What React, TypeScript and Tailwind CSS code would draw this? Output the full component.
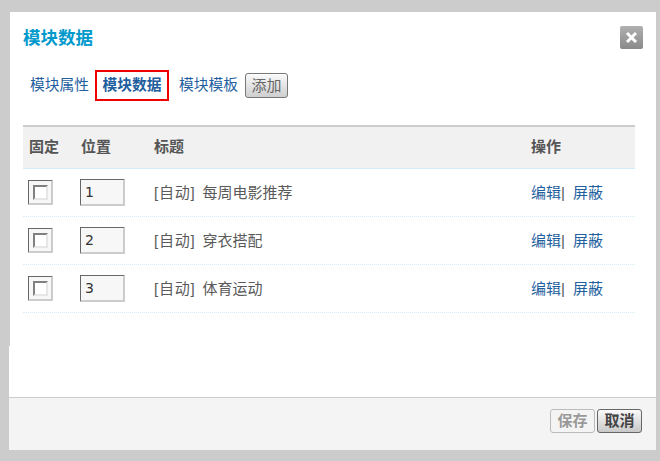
const FONT = "font-['Liberation_Sans','Noto_Sans_CJK_SC',sans-serif]";

const rows = [
  { pos: "1", title: "每周电影推荐" },
  { pos: "2", title: "穿衣搭配" },
  { pos: "3", title: "体育运动" },
];

function Row({ pos, title }: { pos: string; title: string }) {
  return (
    <div className="flex h-12 items-center border-b border-dotted border-[#d3edfb] text-[15px] text-[#5a5a5a]">
      <div className="w-[57px] pl-[5px]">
        <div className="flex h-[25px] w-[25px] items-center justify-center border border-b-2 border-r-2 border-b-[#ccc] border-l-[#666] border-r-[#ccc] border-t-[#666] bg-[#f7f7f7]">
          <input
            type="checkbox"
            readOnly
            className="h-[15px] w-[15px] appearance-none border-2 border-b-[#e6e6e6] border-l-[#808080] border-r-[#e6e6e6] border-t-[#808080] bg-white"
          />
        </div>
      </div>
      <div className="w-[74px]">
        <input
          type="text"
          readOnly
          value={pos}
          className="h-[27px] w-[45px] border border-b-2 border-r-2 border-b-[#ccc] border-l-[#666] border-r-[#ccc] border-t-[#666] bg-[#f7f7f7] pl-[4px] font-['DejaVu_Sans',sans-serif] text-[14px] text-[#333]"
        />
      </div>
      <div className="flex w-[377px] pt-px">
        <span className="mr-[7px] tracking-[0.8px]">[自动]</span>
        <span>{title}</span>
      </div>
      <div className="pt-px text-[#1f5f9f]">
        编辑<span className="text-[#555]">|</span>
        <span className="ml-[8px]">屏蔽</span>
      </div>
    </div>
  );
}

export default function App() {
  return (
    <div className={`h-[461px] w-[660px] overflow-hidden bg-[#ccc] pt-3 ${FONT}`}>
      <div className="ml-[10px] h-[334px] w-[646px] bg-white pl-[13px]">
        <div className="flex items-start justify-between pr-[13px] pt-[14px]">
          <h2 className="text-[17.5px] font-bold leading-[24px] text-[#0099cc]">模块数据</h2>
          <button className="flex h-[23px] w-[23px] items-center justify-center rounded-[2px] bg-gradient-to-b from-[#b0b0b0] to-[#8a8a8a]">
            <svg width="13" height="13" viewBox="0 0 13 13">
              <path d="M2 2 L11 11 M11 2 L2 11" stroke="#fff" strokeWidth="3" />
            </svg>
          </button>
        </div>

        <div className="mt-[20px] flex h-[31px] items-center text-[14.75px] text-[#1f5f9f]">
          <a className="ml-[7px]">模块属性</a>
          <a className="ml-[6px] flex h-[31px] w-[74px] items-center justify-center border-2 border-[#f00000] font-bold">
            模块数据
          </a>
          <a className="ml-[10px]">模块模板</a>
          <button className="ml-[7px] h-[25px] w-[43px] rounded-[3px] border border-[#777] bg-gradient-to-b from-[#fafafa] to-[#cfcfcf] text-[15px] leading-[20px] text-[#666] shadow-[inset_0_1px_0_#fff]">
            添加
          </button>
        </div>

        <div className="mt-[24px] w-[612px]">
          <div className="flex h-[44px] items-center border-b border-t-2 border-b-[#d3edfb] border-t-[#ccc] bg-[#f1f1f1] text-[15px] font-bold text-[#555]">
            <div className="w-[58px] pl-[6px]">固定</div>
            <div className="w-[73px]">位置</div>
            <div className="w-[377px]">标题</div>
            <div>操作</div>
          </div>
          {rows.map((r) => (
            <Row key={r.pos} pos={r.pos} title={r.title} />
          ))}
        </div>
      </div>

      <div className="ml-[9px] h-[51px] w-[647px] bg-white" />

      <div className="ml-[9px] flex h-[53px] w-[647px] items-start justify-end gap-[2px] border-t border-[#ccc] bg-[#f4f4f4] pr-[14px] pt-[11px]">
        <button className="h-[24px] w-[45px] rounded-[3px] border border-[#bbb] bg-[#f4f4f4] text-[15px] font-bold leading-[20px] text-[#999]">
          保存
        </button>
        <button className="h-[24px] w-[45px] rounded-[3px] border border-[#666] bg-gradient-to-b from-[#fafafa] to-[#c8c8c8] text-[15px] font-bold leading-[20px] text-[#444]">
          取消
        </button>
      </div>
    </div>
  );
}
